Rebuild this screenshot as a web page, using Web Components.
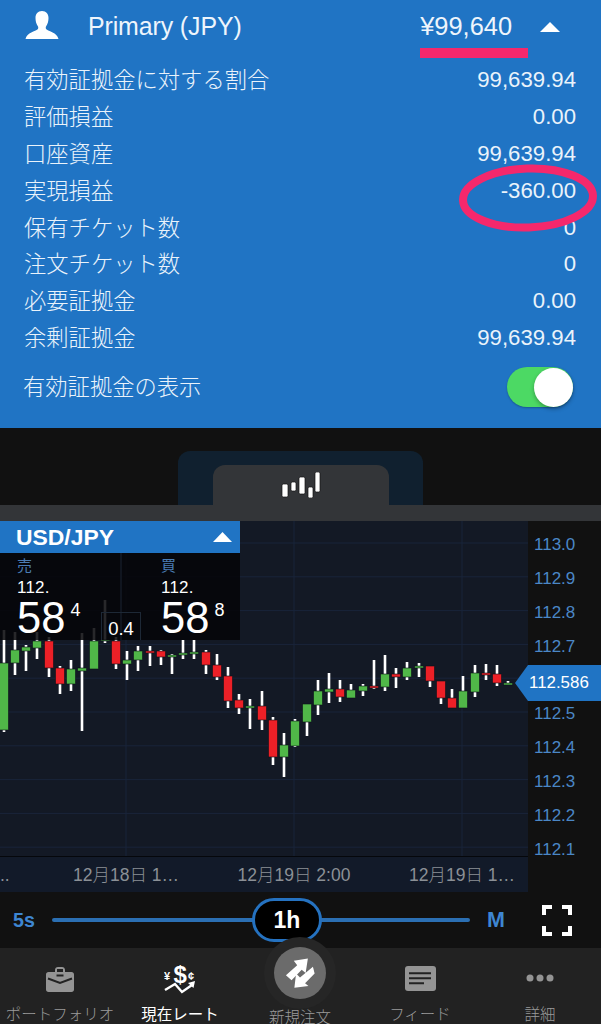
<!DOCTYPE html>
<html lang="ja">
<head>
<meta charset="utf-8">
<title>USD/JPY</title>
<style>
  html, body { margin: 0; padding: 0; background: #111; }
  body { width: 601px; height: 1024px; overflow: hidden; font-family: "Liberation Sans", "Noto Sans CJK JP", sans-serif; }
</style>
</head>
<body>
<account-panel>
  <stat-row label="有効証拠金に対する割合" value="99,639.94"></stat-row>
  <stat-row label="評価損益" value="0.00"></stat-row>
  <stat-row label="口座資産" value="99,639.94"></stat-row>
  <stat-row label="実現損益" value="-360.00"></stat-row>
  <stat-row label="保有チケット数" value="0"></stat-row>
  <stat-row label="注文チケット数" value="0"></stat-row>
  <stat-row label="必要証拠金" value="0.00"></stat-row>
  <stat-row label="余剰証拠金" value="99,639.94"></stat-row>
</account-panel>
<chart-tabs></chart-tabs>
<fx-chart></fx-chart>
<time-axis></time-axis>
<range-slider></range-slider>
<tab-bar></tab-bar>

<script>
const FONT = '"Liberation Sans", "Noto Sans CJK JP", sans-serif';

class StatRow extends HTMLElement {
  constructor() {
    super();
    this.attachShadow({ mode: "open" });
    this.shadowRoot.innerHTML = `
      <style>
        :host { display: flex; justify-content: space-between; align-items: center; height: 36.8px; }
        .label { font-weight: 300; font-size: 22.3px; margin: 0 0 4px -1px; }
        .value { font-size: 22.2px; }
      </style>
      <span class="label">${this.getAttribute("label")}</span>
      <span class="value">${this.getAttribute("value")}</span>`;
  }
}
customElements.define("stat-row", StatRow);

class ToggleSwitch extends HTMLElement {
  constructor() {
    super();
    this.attachShadow({ mode: "open" });
    this.shadowRoot.innerHTML = `
      <style>
        :host { display: flex; justify-content: flex-end; align-items: center; width: 66px; height: 40px; border-radius: 20px; background: #4cd964; box-shadow: 0 1px 2px rgba(0,0,0,.25); }
        .knob { width: 39px; height: 39px; border-radius: 50%; background: #fff; box-shadow: 0 2px 4px rgba(0,0,0,.3); }
      </style>
      <div class="knob"></div>`;
  }
}
customElements.define("toggle-switch", ToggleSwitch);

class AccountPanel extends HTMLElement {
  constructor() {
    super();
    this.attachShadow({ mode: "open" });
    this.shadowRoot.innerHTML = `
      <style>
        :host { display: block; position: relative; height: 428px; background: #2074c4; color: #eaf3fb; font-family: ${FONT}; overflow: hidden; }
        .head { display: flex; align-items: center; height: 53px; padding: 0 41px 0 25px; color: #fff; }
        .head svg.user { width: 34px; height: 28px; margin-right: 29px; margin-top: -3px; }
        .name { flex: 1; font-size: 24.9px; letter-spacing: -.1px; color: #eef5fc; }
        .total { font-size: 25.4px; color: #eef5fc; margin-right: 28px; }
        .tri { width: 20px; height: 10px; }
        .rows { padding: 9px 25px 0; }
        .toggle-row { display: flex; justify-content: space-between; align-items: center; padding: 11px 28px 0 23px; }
        .toggle-row span { font-weight: 300; font-size: 22.3px; margin-bottom: 4px; }
        .mark { position: absolute; left: 0; top: 0; width: 601px; height: 240px; pointer-events: none; }
      </style>
      <div class="head">
        <svg class="user" viewBox="0 0 34 28"><path fill="#fff" d="M17 0c-4.200 0-6.500 3-6.500 7 0 3 .8 6 2.200 8 .7 1 .8 2.400 0 3.300C10.500 20.500 2 21.500.5 28h33C32 21.500 23.500 20.500 21.300 18.300c-.8-.9-.7-2.300 0-3.300C22.700 13 23.500 10 23.500 7c0-4-2.300-7-6.500-7z"/></svg>
        <span class="name">Primary (JPY)</span>
        <span class="total">¥99,640</span>
        <svg class="tri" viewBox="0 0 20 10"><path fill="#fff" d="M10 0l10 10H0z"/></svg>
      </div>
      <div class="rows"><slot></slot></div>
      <div class="toggle-row"><span>有効証拠金の表示</span><toggle-switch></toggle-switch></div>
      <svg class="mark" viewBox="0 0 601 240">
        <rect x="420" y="48" width="108" height="10" fill="#f5286c"/>
        <ellipse cx="528" cy="198" rx="65" ry="29.500" fill="none" stroke="#f5286c" stroke-width="8" transform="rotate(-2 528 198)"/>
      </svg>`;
  }
}
customElements.define("account-panel", AccountPanel);

class ChartTabs extends HTMLElement {
  constructor() {
    super();
    this.attachShadow({ mode: "open" });
    this.shadowRoot.innerHTML = `
      <style>
        :host { display: block; background: #111; }
        .top { display: flex; justify-content: center; align-items: flex-end; height: 77px; }
        .outer { display: flex; justify-content: center; align-items: flex-end; width: 245px; height: 54px; background: #10202f; border-radius: 12px 12px 0 0; }
        .inner { display: flex; justify-content: center; align-items: center; width: 176px; height: 40px; background: #333538; border-radius: 12px 12px 0 0; }
        .bar { height: 16px; background: #333538; }
        svg { width: 40px; height: 26px; }
      </style>
      <div class="top"><div class="outer"><div class="inner">
        <svg viewBox="0 0 40 26">
          <g fill="#fff" stroke="#111" stroke-width=".7">
            <rect x="1" y="12" width="6" height="13" rx="1.500"/>
            <rect x="10" y="10" width="5" height="9" rx="1.500"/>
            <rect x="18" y="5" width="6" height="17" rx="1.500"/>
            <rect x="27" y="15" width="5" height="11" rx="1.500"/>
            <rect x="34" y="0" width="5" height="20" rx="1.500"/>
          </g>
        </svg>
      </div></div></div>
      <div class="bar"></div>`;
  }
}
customElements.define("chart-tabs", ChartTabs);

class QuotePanel extends HTMLElement {
  constructor() {
    super();
    this.attachShadow({ mode: "open" });
    const side = (label, big, small) => `
      <div class="side">
        <div class="lab">${label}</div>
        <div class="pre">112.</div>
        <div class="px"><span class="big">${big}</span><span class="small">${small}</span></div>
      </div>`;
    this.shadowRoot.innerHTML = `
      <style>
        :host { display: block; position: absolute; left: 0; top: 0; width: 240px; font-family: ${FONT}; color: #fff; }
        .head { display: flex; justify-content: space-between; align-items: center; height: 32px; padding: 0 8px 0 16px; background: #2074c4; font-weight: bold; font-size: 22.900px; }
        .head svg { width: 19px; height: 10px; }
        .body { display: grid; grid-template-columns: 120px 120px; height: 87px; background: rgba(5,5,8,.86); }
        .side { padding: 4px 0 0 17px; }
        .side + .side { padding-left: 41px; box-shadow: inset 2px 0 #10151f; }
        .lab { color: #4a7cb4; font-size: 15px; line-height: 17px; }
        .pre { font-size: 17px; line-height: 18px; margin-top: 5px; letter-spacing: .2px; }
        .px { display: flex; align-items: flex-start; height: 43px; }
        .big { font-size: 43.500px; line-height: 43px; }
        .small { font-size: 18px; line-height: 20px; margin: 3px 0 0 5px; }
        .spread { position: absolute; left: 101px; top: 91px; width: 40px; height: 28px; line-height: 32px; text-align: center; box-sizing: border-box; border: 1px solid #1d2836; border-bottom: none; font-size: 18.500px; }
      </style>
      <div class="head"><span>USD/JPY</span><svg viewBox="0 0 19 10"><path fill="#fff" d="M9.500 0L19 10H0z"/></svg></div>
      <div class="body">${side("売", "58", "4")}${side("買", "58", "8")}</div>
      <div class="spread">0.4</div>`;
  }
}
customElements.define("quote-panel", QuotePanel);

// x, wick top, wick bottom, body top, body bottom, colour
const CANDLES = [
  [4,630,732,663,730,"g"],[15,632,675,650,663,"g"],[26,645,671,647,651,"g"],[37,632,659,641,648,"g"],
  [49,637,677,641,668,"r"],[60,666,694,668,684,"r"],[71,660,691,669,684,"g"],[82,633,731,668,671,"g"],
  [94,628,669,641,669,"g"],[105,600,643,640,641,"g"],[116,637,669,641,664,"r"],[127,651,680,660,664,"g"],
  [138,646,671,651,660,"g"],[150,646,666,651,653,"r"],[161,650,665,651,657,"r"],[172,654,674,655,657,"g"],
  [183,640,659,653,655,"g"],[194,640,659,652,654,"g"],[206,650,674,652,665,"r"],[217,654,680,665,677,"r"],
  [228,667,708,676,701,"r"],[239,694,714,700,708,"r"],[250,699,729,706,708,"g"],[262,691,730,706,720,"r"],
  [273,717,765,720,757,"r"],[284,733,777,745,757,"g"],[295,719,747,721,746,"g"],[307,704,736,704,722,"g"],
  [318,680,715,691,705,"g"],[329,673,703,689,692,"g"],[340,680,702,689,697,"r"],[351,684,698,690,698,"g"],
  [363,684,696,686,691,"g"],[374,660,689,686,688,"r"],[385,655,691,674,687,"g"],[396,668,688,674,677,"r"],
  [407,662,680,668,677,"g"],[419,663,677,666,668,"g"],[430,666,687,666,681,"r"],[441,681,704,681,698,"r"],
  [452,689,708,698,708,"r"],[463,676,708,691,708,"g"],[475,665,697,673,692,"g"],[486,664,680,673,675,"r"],
  [497,665,686,674,683,"r"],[508,681,685,683,685,"g"]
];

class FxChart extends HTMLElement {
  constructor() {
    super();
    this.attachShadow({ mode: "open" });
    let grid = "";
    for (let i = 0; i < 10; i++) {
      const y = 543 + i * 33.8;
      grid += `<line x1="0" x2="528" y1="${y}" y2="${y}"/>`;
    }
    [126, 294, 462].forEach(x => { grid += `<line x1="${x}" x2="${x}" y1="521" y2="856"/>`; });
    let candles = "";
    CANDLES.forEach(([x, t, b, bt, bb, c]) => {
      const fill = c === "g" ? "#50b748" : "#ec2027";
      candles += `<rect x="${x - 1.3}" y="${t}" width="2.600" height="${b - t}" fill="#fff"/>`;
      candles += `<rect x="${x - 4.5}" y="${bt}" width="9" height="${bb - bt}" fill="${fill}" stroke="#0d1119" stroke-width=".6"/>`;
    });
    const labels = ["113.0", "112.9", "112.8", "112.7", "", "112.5", "112.4", "112.3", "112.2", "112.1"];
    this.shadowRoot.innerHTML = `
      <style>
        :host { display: flex; position: relative; height: 335px; font-family: ${FONT}; background: #111; }
        .plot { position: relative; width: 528px; background: #131925; overflow: hidden; }
        .plot svg { display: block; width: 528px; height: 335px; }
        .grid line { stroke: #19243a; stroke-width: 1; }
        .axis { flex: 1; padding: 7px 0 0 6px; position: relative; z-index: 1; }
        .axis div { height: 33.9px; line-height: 33.9px; font-size: 17px; color: #4b87c6; }
        .tag { position: absolute; right: 0; top: 144px; width: 86px; height: 36px; z-index: 2; }
        .tag svg { position: absolute; left: 0; top: 0; }
        .tag span { position: absolute; left: 14px; top: 0; line-height: 36px; font-size: 16.900px; color: #fff; }
      </style>
      <div class="plot">
        <svg viewBox="0 521 528 335"><g class="grid">${grid}</g>${candles}</svg>
        <quote-panel></quote-panel>
      </div>
      <div class="axis">${labels.map(l => `<div>${l}</div>`).join("")}</div>
      <div class="tag">
        <svg width="86" height="36" viewBox="0 0 86 36"><path fill="#2074c4" d="M13 0h73v36H13L0 18z"/></svg>
        <span>112.586</span>
      </div>`;
  }
}
customElements.define("fx-chart", FxChart);

class TimeAxis extends HTMLElement {
  constructor() {
    super();
    this.attachShadow({ mode: "open" });
    const labels = ["12月18日 1…", "12月19日 2:00", "12月19日 1…"];
    this.shadowRoot.innerHTML = `
      <style>
        :host { display: block; height: 36px; font-family: ${FONT}; position: relative; }
        .strip { display: grid; grid-template-columns: 42px repeat(3, 168px); width: 528px; height: 35px; background: #121a29; border-top: 1px solid #05070b; }
        span { text-align: center; line-height: 36px; font-size: 17.500px; color: #8b9096; white-space: nowrap; font-weight: 300; }
        span:first-child { text-align: left; }
      </style>
      <div class="strip"><span>..</span>${labels.map(l => `<span>${l}</span>`).join("")}</div>`;
  }
}
customElements.define("time-axis", TimeAxis);

class RangeSlider extends HTMLElement {
  constructor() {
    super();
    this.attachShadow({ mode: "open" });
    this.shadowRoot.innerHTML = `
      <style>
        :host { display: flex; align-items: center; height: 56px; padding: 0 29px 0 13px; background: #111; font-family: ${FONT}; }
        .end { color: #3e86d2; font-weight: bold; font-size: 19.700px; }
        .m { font-size: 21.500px; }
        .track { flex: 1; display: flex; align-items: center; margin: 0 17px; height: 4px; background: #2b6fb3; border-radius: 2px; }
        .pill { margin-left: 200px; width: 64px; height: 38px; line-height: 38px; text-align: center; background: #000; border: 3px solid #2572c0; border-radius: 22px; color: #fff; font-weight: bold; font-size: 23px; flex: none; }
        svg { width: 30px; height: 31px; margin-left: 37px; flex: none; }
      </style>
      <span class="end">5s</span>
      <div class="track"><div class="pill">1h</div></div>
      <span class="end m">M</span>
      <svg viewBox="0 0 30 31"><path fill="none" stroke="#fff" stroke-width="4" d="M10 2H2v8M20 2h8v8M10 29H2v-8M20 29h8v-8"/></svg>`;
  }
}
customElements.define("range-slider", RangeSlider);

class TabItem extends HTMLElement {
  constructor() {
    super();
    this.attachShadow({ mode: "open" });
    const on = this.hasAttribute("active");
    this.shadowRoot.innerHTML = `
      <style>
        :host { display: flex; flex-direction: column; align-items: center; height: 76px; }
        .icon { height: 59px; display: flex; align-items: center; justify-content: center; padding: 0 0 0; box-sizing: border-box; flex: none; }
        .text { font-size: 15.500px; line-height: 16px; white-space: nowrap; font-weight: ${on ? 400 : 300}; color: ${on ? "#fff" : "#9a9a9a"}; margin-top: ${this.getAttribute("drop") || 0}px; }
      </style>
      <div class="icon"><slot></slot></div>
      <div class="text">${this.getAttribute("label")}</div>`;
  }
}
customElements.define("tab-item", TabItem);

class TabBar extends HTMLElement {
  constructor() {
    super();
    this.attachShadow({ mode: "open" });
    this.shadowRoot.innerHTML = `
      <style>
        :host { display: block; position: relative; height: 76px; background: #222; font-family: ${FONT}; }
        .items { display: grid; grid-template-columns: repeat(5, 120px); width: 601px; height: 76px; overflow: hidden; }
        .fab { position: absolute; left: 264px; top: -11px; width: 72px; height: 72px; border-radius: 50%; background: #262626; display: flex; align-items: center; justify-content: center; }
        .fab div { width: 52px; height: 52px; border-radius: 50%; background: #6b6b6b; display: flex; align-items: center; justify-content: center; }
      </style>
      <div class="items">
        <tab-item label="ポートフォリオ">
          <svg width="28" height="25" viewBox="0 0 28 25" style="margin-top:3px">
            <path fill="#949494" d="M2.500 5H9V3C9 1.300 10.300 0 12 0h4c1.700 0 3 1.300 3 3v2h6.500C27 5 28 6 28 7.500v15c0 1.500-1 2.500-2.500 2.500h-23C1 25 0 24 0 22.500v-15C0 6 1 5 2.500 5zM11 2v3h6V2z"/>
            <path fill="none" stroke="#222" stroke-width="2" d="M2 11.500l12 4.500 12-4.500"/>
            <rect x="10.500" y="7.500" width="7" height="2" fill="#222"/>
          </svg>
        </tab-item>
        <tab-item label="現在レート" active>
          <svg width="32" height="38" viewBox="0 -4 32 38" font-family="Liberation Sans" font-weight="bold" fill="#fff">
            <text x="0" y="17" font-size="11">¥</text>
            <text x="9.500" y="20" font-size="24">$</text>
            <text x="24" y="17" font-size="11">¢</text>
            <path fill="none" stroke="#fff" stroke-width="2.400" d="M1 27l10-6 7 8 10-7"/>
            <path fill="#fff" d="M31 18l-1.500 7-5.500-5z"/>
          </svg>
        </tab-item>
        <tab-item label="新規注文" drop="3"></tab-item>
        <tab-item label="フィード">
          <svg width="31" height="25" viewBox="0 0 31 25" style="margin-top:1px">
            <rect width="31" height="25" rx="3" fill="#949494"/>
            <path stroke="#222" stroke-width="2" d="M4 7.300h22M4 12.300h22M4 17.300h15"/>
          </svg>
        </tab-item>
        <tab-item label="詳細">
          <svg width="28" height="8" viewBox="0 0 28 8" fill="#949494" style="margin-top:1px">
            <circle cx="4" cy="4" r="3.500"/><circle cx="14" cy="4" r="3.500"/><circle cx="24" cy="4" r="3.500"/>
          </svg>
        </tab-item>
      </div>
      <div class="fab"><div>
        <svg width="34" height="36" viewBox="0 0 30 32" fill="#fff">
          <path d="M22 3l-2 13-3.500-3-9 9.500L2.500 18l10-9-3-4z"/>
          <path d="M10 29l1.500-12.500 3.500 3.500L26.500 10.500l1.500 6L19.500 25l3 2.500z"/>
        </svg>
      </div></div>`;
  }
}
customElements.define("tab-bar", TabBar);
</script>
</body>
</html>
